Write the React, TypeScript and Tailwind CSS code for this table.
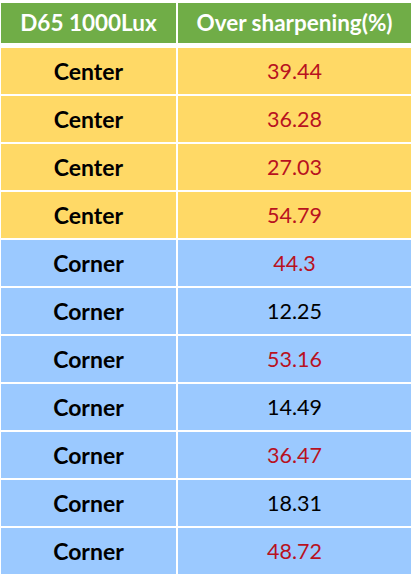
const rows: { place: string; value: string; high: boolean }[] = [
  { place: "Center", value: "39.44", high: true },
  { place: "Center", value: "36.28", high: true },
  { place: "Center", value: "27.03", high: true },
  { place: "Center", value: "54.79", high: true },
  { place: "Corner", value: "44.3", high: true },
  { place: "Corner", value: "12.25", high: false },
  { place: "Corner", value: "53.16", high: true },
  { place: "Corner", value: "14.49", high: false },
  { place: "Corner", value: "36.47", high: true },
  { place: "Corner", value: "18.31", high: false },
  { place: "Corner", value: "48.72", high: true },
];

export default function App() {
  return (
    <div className="min-h-screen bg-white pt-[3px] pl-[1px] font-['Lato',sans-serif]">
      <div className="grid w-[410px] grid-cols-[175px_233px] gap-x-[2px] text-[22.5px]">
        {/* Header */}
        <div className="flex h-[40px] items-center justify-center bg-[#70ad47] font-bold text-white">
          D65 1000Lux
        </div>
        <div className="flex h-[40px] items-center justify-center bg-[#70ad47] font-bold text-white">
          Over sharpening(%)
        </div>
      </div>

      {/* Body */}
      <div className="mt-[5px] grid w-[410px] grid-cols-[175px_233px] gap-x-[2px] gap-y-[2px]">
        {rows.map((row, i) => {
          const bg = row.place === "Center" ? "bg-[#ffd966]" : "bg-[#9bc9ff]";
          return [
            <div
              key={`p${i}`}
              className={`flex h-[46px] items-center justify-center text-[23px] font-bold text-black ${bg}`}
            >
              {row.place}
            </div>,
            <div
              key={`v${i}`}
              className={`flex h-[46px] items-center justify-center text-[21.5px] ${bg} ${
                row.high ? "text-[#b8121f]" : "text-black"
              }`}
            >
              {row.value}
            </div>,
          ];
        })}
      </div>
    </div>
  );
}
